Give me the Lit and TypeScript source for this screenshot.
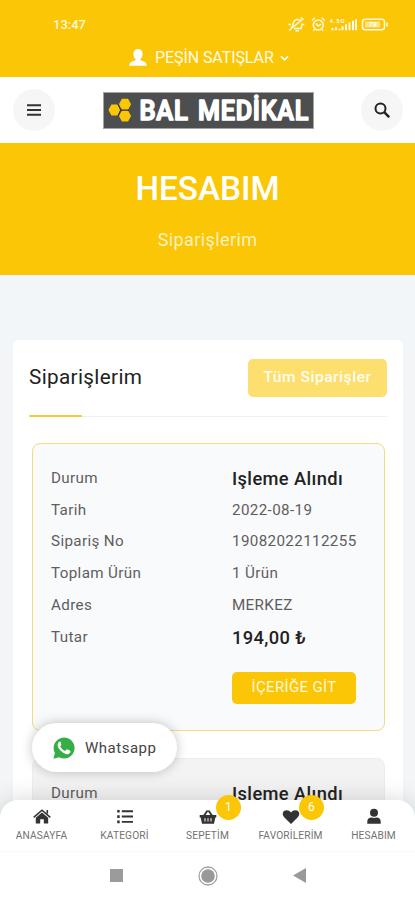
import { LitElement, html, css, svg } from "lit";
import { customElement } from "lit/decorators.js";

const userIcon = html`<svg class="user" viewBox="0 0 18 17"><path fill="#fff" d="M9 0c3 0 4.600 2 4.600 5 0 2.400-1 4-2.200 5v1.200c2.500.8 6.300 1.500 6.300 5.600H.3c0-4.100 3.800-4.800 6.300-5.600V10C5.400 9 4.400 7.400 4.400 5 4.400 2 6 0 9 0z"/></svg>`;

const statusIcons = html`<svg class="status-icons" width="102" height="20" viewBox="287 14 102 20" fill="none" stroke="#fff" stroke-opacity=".9" stroke-width="1.500">
  <path d="M291 28.300c2-2 2-4 2.500-6 1.200-3.300 5.300-3.800 7-1.300M302 23.500l-.8 5H294M295.500 30.800h3.500M289 30.500l14.500-12M300.500 18.500l1.500-1M288.500 24.500h2.500M302.500 24.500h1.800"/>
  <circle cx="318.300" cy="25" r="5"/><path d="M315.800 23.500l2.500 2.500 3-2M312 20.500l3-2.800M324.700 20.500l-3-2.800M314.500 29.500l-1 1.200M322.200 29.500l1 1.200"/>
  <path d="M332.500 30.300v-2.300M336 30.300v-3M339.500 30.300v-1.500M342.500 30.300v-4M346 30.300v-6M349.500 30.300v-8M353 30.300v-9.500M356 30.300v-11" stroke-width="2"/>
  <text x="329.500" y="23" font-size="6" fill="#fff" stroke="none" textLength="15" font-family="Roboto, sans-serif">4.5G</text>
  <rect x="362.500" y="19.200" width="22" height="10.600" rx="2.800"/><path d="M387 22.500v4"/>
  <rect x="365" y="21.500" width="15" height="6" fill="#fff" fill-opacity=".5" stroke="none"/>
  <text x="368.500" y="27.300" font-size="7.500" fill="#fff" stroke="none" font-family="Roboto, sans-serif">78</text>
</svg>`;

const hex = (cx: number, cy: number) => svg`<path d="M${cx - 5.4} ${cy}l2.700-4.900h5.400l2.700 4.900-2.700 4.900h-5.400z" fill="#fbc605" stroke="#fbc605" stroke-width="1.200" stroke-linejoin="round"/>`;

const logo = html`<svg class="logo" width="211" height="37" viewBox="103 91.500 211 37">
  <rect x="103" y="91.500" width="211" height="37" fill="#a5a5a5"/><rect x="104" y="92.500" width="209" height="35" fill="#4c4e50"/>
  ${hex(114.5, 109.5)}${hex(125, 103.7)}${hex(125, 115.5)}
  <path d="M118 103.700l2.600 5.800-2.600 6M121 109.600h8" fill="none" stroke="#2e2e2e" stroke-width="1"/>
  <g fill="#fff" stroke="#fff" stroke-width="1.700" stroke-linejoin="round" stroke-linecap="round" font-family="Roboto, sans-serif" font-weight="500" font-size="27.500">
    <text x="139.500" y="119.700" textLength="49" lengthAdjust="spacingAndGlyphs" letter-spacing=".8">BAL</text>
    <text x="198" y="119.700" textLength="111" lengthAdjust="spacingAndGlyphs" letter-spacing=".8">MEDİKAL</text>
  </g></svg>`;

const whatsapp = html`<svg width="22" height="22" viewBox="0 0 22 22"><path d="M.4 21.700l1.500-5.600A10.500 10.500 0 1 1 6.200 20.300z" fill="#34ae45"/><path d="M7.600 5.100c-.5-.8-1.300-.6-1.900.1-2.800 3.200.5 7.400 3.500 9.800 2.700 2.200 6.300 3.300 8 .4.500-.9.400-1.400-.4-1.900l-2.200-1.100c-.6-.3-.9-.1-1.300.4-.8 1-1 1.300-2.200.6-1.700-.9-2.900-2.200-3.700-3.700-.3-.6.3-1 .8-1.700.2-.4.2-.6 0-1z" fill="#fff"/></svg>`;

const navIcons = {
  home: svg`<path d="M9 4.500l6.200 5.300V15.500h-4.400v-4.300H7.200v4.300H2.800V9.800z"/><path d="M.7 9.300L9 2.200l8.300 7.100M14.300 2v3.500" fill="none" stroke="#333" stroke-width="1.600"/>`,
  list: svg`<path d="M1.200 2h2.500v2.600H1.200zM1.200 7.300h2.500v2.600H1.200zM1.200 12.600h2.500v2.600H1.200zM5.800 2.300H17v1.900H5.800zM5.800 7.600H17v1.900H5.800zM5.800 12.900H17v1.900H5.800z"/>`,
  basket: svg`<path d="M.7 7h3.600l3.500-5 1.500 1L6.600 7h4.800L8.700 3l1.500-1 3.500 5h3.600v2.400h-1l-1.300 6.300H3L1.700 9.400h-1z"/><path d="M6 10.200v3.300M9 10.200v3.300M12 10.200v3.300" stroke="#fff"/>`,
  heart: svg`<path d="M9 16L2.200 9.300C-.7 6 1 2.300 4.500 2.200 6.500 2.200 7.800 3 9 4.500c1.200-1.500 2.500-2.300 4.500-2.300 3.500.1 5.200 3.800 2.300 7.100z"/>`,
  user: svg`<circle cx="9" cy="4.700" r="4"/><path d="M2.300 15.800v-2.300c0-2.700 1.800-4 4.200-4 1.700.6 3.300.6 5 0 2.400 0 4.200 1.300 4.200 4v2.300z"/>`,
};

const navItems = [
  { icon: navIcons.home, label: "ANASAYFA", badge: "" },
  { icon: navIcons.list, label: "KATEGORİ", badge: "" },
  { icon: navIcons.basket, label: "SEPETİM", badge: "1" },
  { icon: navIcons.heart, label: "FAVORİLERİM", badge: "6" },
  { icon: navIcons.user, label: "HESABIM", badge: "" },
];

const orderRows = [
  ["Durum", "Işleme Alındı", "strong"],
  ["Tarih", "2022-08-19", ""],
  ["Sipariş No", "19082022112255", ""],
  ["Toplam Ürün", "1 Ürün", ""],
  ["Adres", "MERKEZ", ""],
  ["Tutar", "194,00 ₺", "strong price"],
];

@customElement("app-root")
export class AppRoot extends LitElement {
  static styles = css`
    :host { display: block; width: 415px; height: 900px; font-family: Roboto, "Liberation Sans", sans-serif; }
    * { box-sizing: border-box; }
    svg { display: block; flex: none; }
    .screen { position: relative; height: 900px; overflow: hidden; background: #f3f6f8; display: flex; flex-direction: column; }
    .status { flex: none; height: 40px; background: #fbc605; display: flex; justify-content: space-between; padding: 14px 26px 0 53px; color: #fff8df; font-size: 13px; font-weight: 500; line-height: 22px; }
    .account { flex: none; height: 37px; background: #fbc605; display: flex; align-items: center; padding: 0 0 2px 129px; color: #fffbea; font-size: 16px; letter-spacing: -.08px; }
    .user { width: 18px; height: 17px; margin-right: 8px; }
    .chev { margin: 2px 0 0 6px; }
    .header { flex: none; height: 66px; background: #fff; display: flex; align-items: center; justify-content: space-between; padding: 0 12px 0 13px; }
    .round { width: 42px; height: 42px; border-radius: 50%; background: #f6f6f6; display: flex; align-items: center; justify-content: center; }
    .banner { flex: none; height: 132px; background: #fbc605; text-align: center; padding-top: 26px; color: #fff; }
    .banner h1 { margin: 0; font-size: 33.300px; line-height: 40px; font-weight: 500; }
    .banner p { margin: 19px 0 0; font-size: 18px; line-height: 24px; color: #fff1c0; letter-spacing: .4px; }
    .panel { flex: none; margin: 65px 12px 0 13px; height: 560px; background: #fff; border-radius: 6px; padding: 18px 16px 0; }
    .panel-head { display: flex; justify-content: space-between; align-items: center; height: 39px; }
    .panel-head h2 { margin: 0; font-size: 20.700px; line-height: 24px; padding-bottom: 1px; font-weight: 400; color: #222; letter-spacing: .35px; }
    .all { width: 139px; height: 38px; border-radius: 5px; background: #fcdf6f; color: #fffdf0; font-size: 15.500px; font-weight: 500; letter-spacing: .55px; display: flex; align-items: center; justify-content: center; padding-bottom: 1px; }
    .rule { height: 2px; margin: 18px 0 26px; background: linear-gradient(#f0f0f0, #f0f0f0) 0 50% / 100% 1px no-repeat; }
    .rule i { display: block; width: 53px; height: 2px; border-radius: 1px; background: #f3cb38; }
    .order { height: 288px; margin: 0 2px 27px 3px; border: 1.500px solid #f3dc80; border-radius: 8px; background: #f9fafc; padding: 18px 18px 0; }
    .order.next { background: #f3f3f3; border-color: #ededed; }
    .row { display: grid; grid-template-columns: 181px 1fr; align-items: center; height: 31.750px; font-size: 15.200px; color: #5e5e5e; letter-spacing: .36px; white-space: nowrap; }
    .strong { font-size: 18.300px; font-weight: 500; color: #222; letter-spacing: .38px; padding-top: 2px; }
    .go { margin: 19px 0 0 181px; width: 124px; height: 32px; border-radius: 5px; background: #fbc605; color: #fff8dc; font-size: 15px; letter-spacing: .35px; display: flex; align-items: center; justify-content: center; padding-bottom: 1px; }
    .wa { position: absolute; left: 32px; top: 723px; width: 145px; height: 49px; border-radius: 25px; background: #fff; box-shadow: 0 0 12px rgba(0,0,0,.24); display: flex; align-items: center; gap: 10px; padding-left: 21px; font-size: 15px; color: #444; letter-spacing: .5px; }
    .dock { position: absolute; left: 0; bottom: 0; width: 415px; height: 100px; background: #fff; border-radius: 18px 18px 0 0; box-shadow: 0 0 24px rgba(0,0,0,.17); }
    .nav { height: 52px; display: grid; grid-template-columns: repeat(5, 83px); border-bottom: 1px solid #fafafa; }
    .item { position: relative; display: flex; flex-direction: column; align-items: center; padding-top: 8px; font-size: 10.200px; color: #727272; letter-spacing: .14px; }
    .item svg { fill: #333; margin-bottom: 4px; }
    .item span { line-height: 12px; }
    .item b { position: absolute; left: 50px; top: -5px; width: 25px; height: 25px; border-radius: 50%; background: #fbc605; color: #fff; font-size: 12px; font-weight: 400; line-height: 25px; text-align: center; }
    .system { height: 48px; display: flex; justify-content: center; align-items: center; gap: 75px; padding: 0 0 1px 1px; }
  `;

  private order(rows: string[][], next = false) {
    return html`<section class="order ${next ? "next" : ""}">
      ${rows.map(([label, value, kind]) => html`<div class="row"><span>${label}</span><span class=${kind}>${value}</span></div>`)}
      ${next ? "" : html`<div class="go">İÇERİĞE GİT</div>`}
    </section>`;
  }

  render() {
    return html`<div class="screen">
      <div class="status"><span>13:47</span>${statusIcons}</div>
      <div class="account">${userIcon}<span>PEŞİN SATIŞLAR</span><svg class="chev" width="9" height="7" viewBox="0 0 9 7"><path d="M1 1.300l3.500 3.500L8 1.300" fill="none" stroke="#fff" stroke-width="1.700"/></svg></div>
      <header class="header">
        <div class="round"><svg width="14" height="12" viewBox="0 0 14 12"><path d="M0 1.200h14M0 6h14M0 10.800h14" stroke="#333" stroke-width="1.900"/></svg></div>
        ${logo}
        <div class="round"><svg width="16" height="16" viewBox="0 0 16 16" fill="none" stroke="#222"><circle cx="6.500" cy="6.500" r="5" stroke-width="2"/><path d="M10.200 10.200l5 5" stroke-width="2.500"/></svg></div>
      </header>
      <div class="banner"><h1>HESABIM</h1><p>Siparişlerim</p></div>
      <main class="panel">
        <div class="panel-head"><h2>Siparişlerim</h2><div class="all">Tüm Siparişler</div></div>
        <div class="rule"><i></i></div>
        ${this.order(orderRows)}${this.order(orderRows.slice(0, 1), true)}
      </main>
      <div class="wa">${whatsapp}<span>Whatsapp</span></div>
      <div class="dock">
        <nav class="nav">${navItems.map((n) => html`<div class="item"><svg width="18" height="18" viewBox="0 0 18 18">${n.icon}</svg><span>${n.label}</span>${n.badge ? html`<b>${n.badge}</b>` : ""}</div>`)}</nav>
        <div class="system">
          <svg width="13" height="13"><rect width="13" height="13" fill="#9b9b9b"/></svg>
          <svg width="20" height="20" viewBox="0 0 20 20"><circle cx="10" cy="10" r="9" fill="none" stroke="#a2a2a2" stroke-width="1.300"/><circle cx="10" cy="10" r="6.800" fill="#999"/></svg>
          <svg width="13" height="15"><path d="M0 7.500L13 0v15z" fill="#999"/></svg>
        </div>
      </div>
    </div>`;
  }
}
